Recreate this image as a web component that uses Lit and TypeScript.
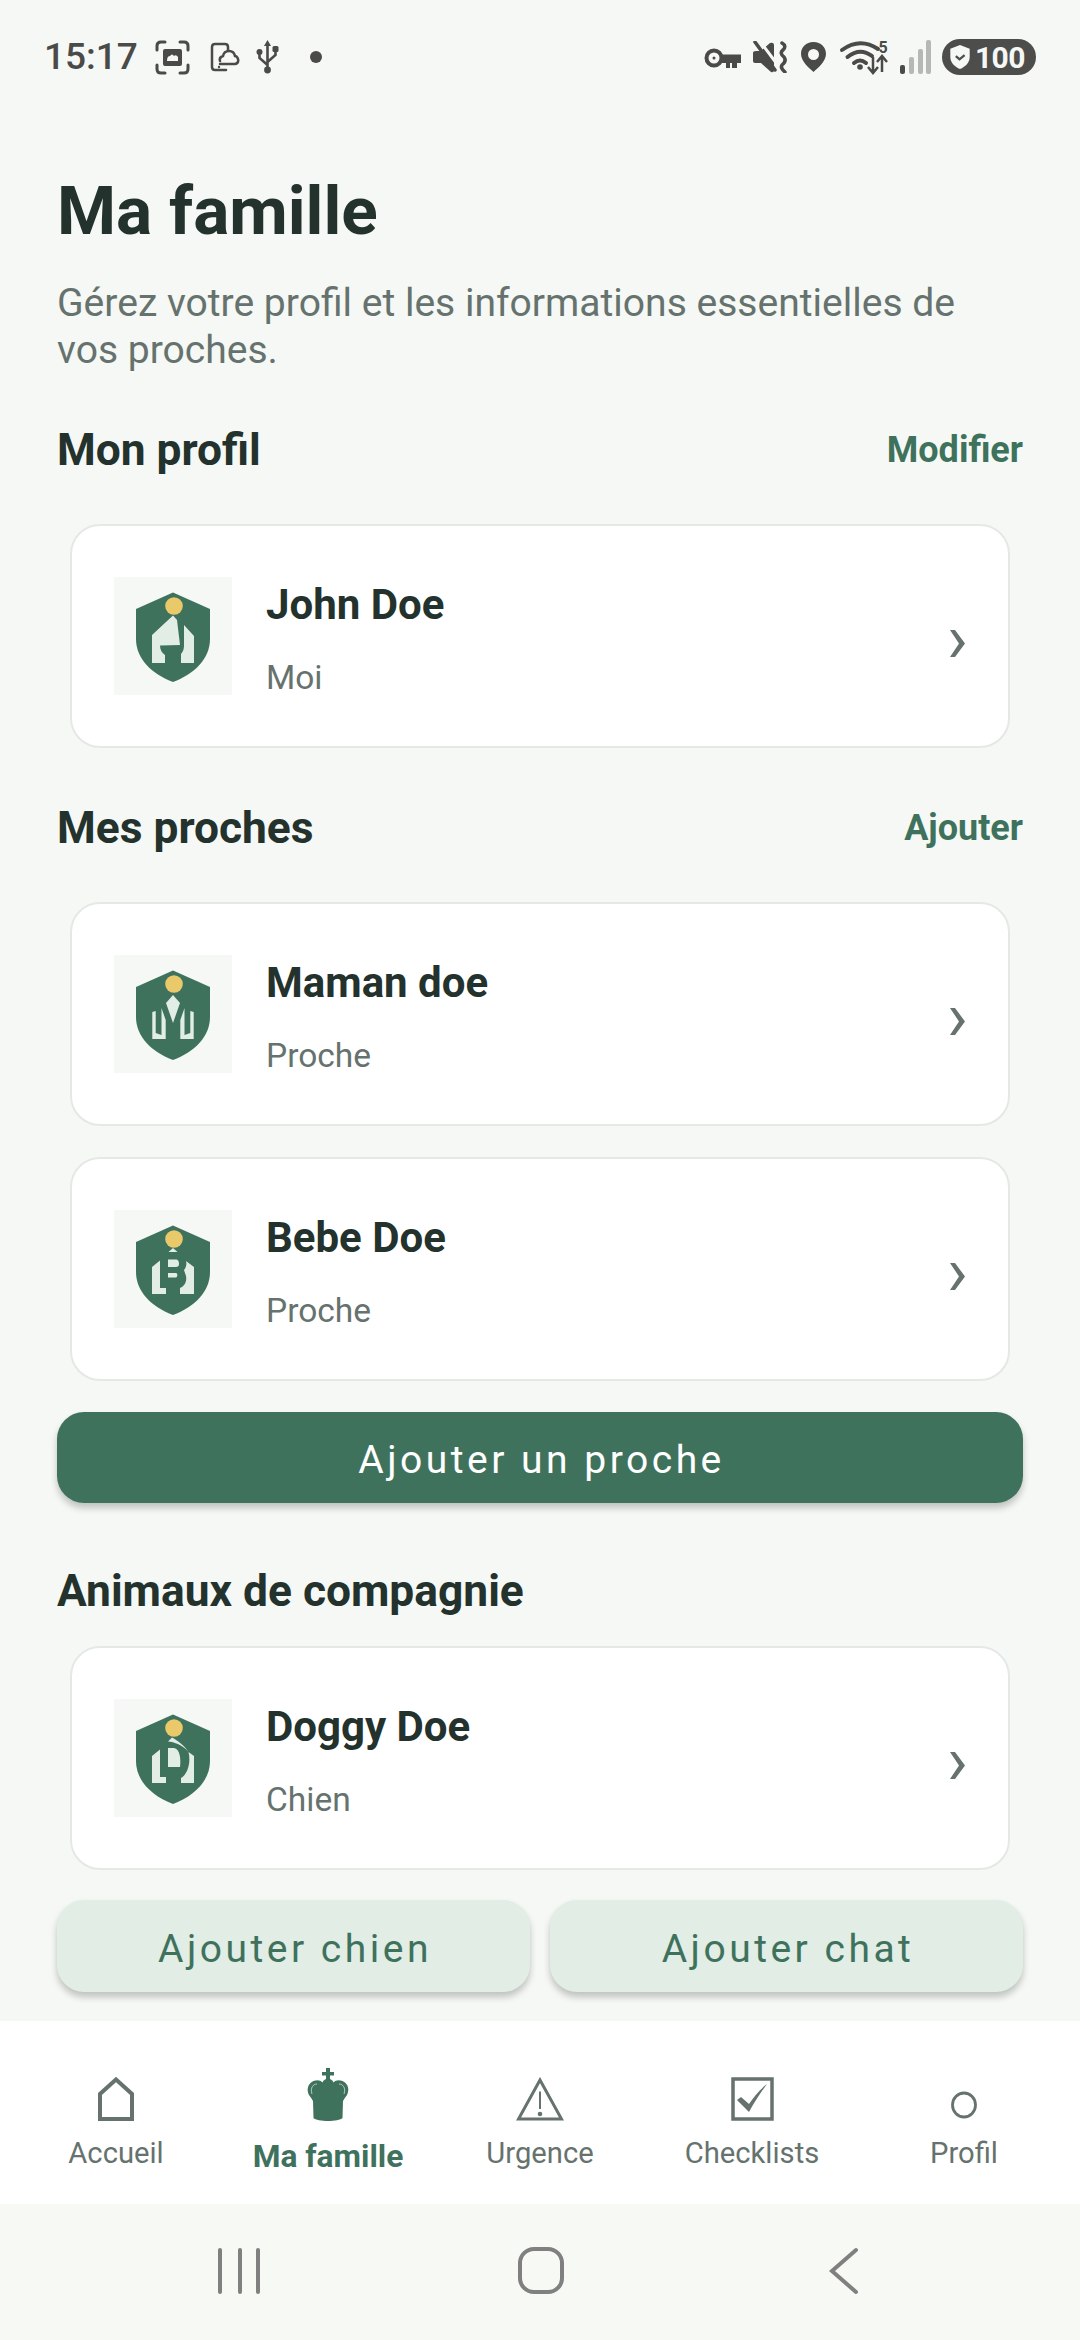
import { LitElement, html, css, svg } from "lit";
import { customElement } from "lit/decorators.js";

const shield = svg`<path fill="#3f725d" d="M59 15.5 L96 32 V62 C96 82 80 97 59 105 C38 97 22 82 22 62 V32Z"/><circle cx="60" cy="29" r="8.8" fill="#eac96b"/>`;
const L = "#e1ede5";
const figures: Record<string, unknown> = {
  john: svg`<path fill="${L}" d="M59 38.5 L63 43 L66 68 L46 68.5 C46 73 48 76 51 78 V86 H38 V58 L59 38.5Z"/><path fill="${L}" d="M70 48 L80 59 V86 H67 V77 C70 74 70 70 70 67Z"/>`,
  maman: svg`<path fill="${L}" d="M59 40 L66 48 L59 68 L52 48Z"/><path fill="${L}" d="M38.3 57 L41.7 56 V78 L47.5 80 V53 L51.7 65 V84 H38.3Z"/><path fill="${L}" d="M79.7 57 L76.3 56 V78 L70.5 80 V53 L66.3 65 V84 H79.7Z"/>`,
  bebe: svg`<path fill="${L}" d="M59 38 L63.5 42 H54.5Z"/><path fill="${L}" d="M38 57 L46 50.5 V78 H52 V84 H38Z"/><path fill="${L}" d="M54 49.5 H62 C64.5 49.5 65 52 65 54 C65 56 64 57 62 57 H54Z"/><path fill="${L}" d="M54 63 H62 C63.5 63 64 66.5 62 67.5 H54Z"/><path fill="${L}" d="M72 51 L80 57 V84 H66 V78 C71 76 73 71 72 66 C71.5 64 70.5 62 70 60 C72 58 73 54 72 51Z"/>`,
  doggy: svg`<path fill="${L}" d="M58 38.5 C64 42 70 46 74.5 53 C69 46 60 43 54 42.5Z"/><path fill="${L}" d="M38 57 L46 50.5 V78 H52 V84 H38Z"/><path fill="${L}" d="M54 49 H60 C66 50 67 60 66 68 H54Z"/><path fill="${L}" d="M74.5 53 L80 57 V84 H67 V79 C74 75 77 63 74.5 53Z"/>`,
};
const logo = (k: string) => html`<svg class="avatar" viewBox="0 0 118 118">${shield}${figures[k]}</svg>`;

const chevron = html`<svg class="chev" viewBox="0 0 15 27"><path fill="#66726e" d="M0 0H5L15 13.5 5 27H0L9 13.5Z"/></svg>`;

const card = (k: string, name: string, sub: string) => html`
  <div class="card">
    ${logo(k)}
    <div class="who"><div class="name">${name}</div><div class="sub">${sub}</div></div>
    ${chevron}
  </div>`;

const G = "#4a4a48";

@customElement("app-root")
export class AppRoot extends LitElement {
  static styles = css`
    :host { display: flex; flex-direction: column; width: 1080px; height: 2340px; overflow: hidden; background: #f5f8f4; font-family: Roboto, "Liberation Sans", sans-serif; color: #24322e; }
    .status { height: 114px; flex: none; display: flex; align-items: flex-start; justify-content: space-between; padding: 39px 44px 0 44px; box-sizing: border-box; }
    .sl, .sr { display: flex; align-items: center; height: 36px; }
    .time { font-size: 37px; font-weight: 500; color: #4a4a48; line-height: 36px; width: 111px; }
    .sl svg, .sr svg { display: block; flex: none; }
    .i2 { margin-left: 20px; } .i3 { margin-left: 16px; } .i4 { margin-left: 31px; }
    .sr svg + svg { margin-left: 12px; }
    .batt { margin-left: 11px; width: 94px; height: 36px; border-radius: 18px; background: #4d4d4b; color: #f5f8f4; display: flex; align-items: center; padding-left: 8px; box-sizing: border-box; font-size: 30px; font-weight: 700; gap: 5px; letter-spacing: -0.6px; }
    main { flex: 1; min-height: 0; overflow: hidden; padding: 59px 57px 0; box-sizing: border-box; }
    h1 { margin: 0; font-size: 67.5px; line-height: 76px; font-weight: 700; }
    .lead { margin: 31px 0 0; font-size: 39.05px; line-height: 47px; color: #66726e; }
    .head { display: flex; justify-content: space-between; align-items: center; height: 50px; }
    .head h2 { margin: 0; font-size: 44.3px; font-weight: 700; line-height: 48px; padding-top: 2px; }
    .head span { font-size: 36px; font-weight: 700; color: #3f725d; padding-top: 2px; }
    .h1 { margin-top: 50px; } .h2 { margin-top: 54px; } .h3 { margin-top: 62px; }
    .cards { display: flex; flex-direction: column; gap: 31px; margin: 0 13px; }
    .c1 { margin-top: 50px; } .c3 { margin-top: 31px; }
    .card { display: flex; align-items: center; height: 224px; box-sizing: border-box; background: #fff; border: 2px solid #e4e9e4; border-radius: 30px; padding: 0 43px 0 42px; }
    .avatar { width: 118px; height: 118px; flex: none; background: #f5f8f4; display: block; }
    .who { flex: 1; margin-left: 34px; padding-top: 5px; }
    .name { font-size: 42px; line-height: 50px; font-weight: 700; }
    .sub { font-size: 33.5px; line-height: 40px; color: #66726e; margin-top: 28px; }
    .chev { width: 15px; height: 27px; flex: none; display: block; margin-top: 15px; }
    .btn { display: flex; align-items: center; justify-content: center; height: 91px; padding: 5px 0 0 3px; box-sizing: border-box; border-radius: 27px; font-size: 39px; letter-spacing: 3.5px; box-shadow: 0 5px 7px rgba(0,0,0,.22); }
    .primary { margin-top: 31px; background: #3f725d; color: #fff; }
    .pair { display: grid; grid-template-columns: 1fr 1fr; gap: 20px; margin-top: 30px; }
    .soft { background: #e1ede5; color: #3f725d; height: 92px; }
    nav { flex: none; height: 183px; background: #fff; display: grid; grid-template-columns: repeat(5, 212px); padding: 0 10px; box-sizing: border-box; }
    .item { display: flex; flex-direction: column; align-items: center; color: #66726e; font-size: 29.2px; }
    .ic { height: 100px; display: flex; align-items: flex-end; }
    .ic svg { display: block; }
    .lab { margin-top: 14px; line-height: 36px; }
    .item.on { color: #3f725d; font-weight: 700; font-size: 31.7px; }
    .item.on .ic { height: 101px; }
    .item.on .lab { margin-top: 17px; }
    .gest { flex: none; height: 136px; background: #f7f9f5; display: block; }
    .gest svg { display: block; }
  `;

  render() {
    return html`
      <div class="status">
        <div class="sl">
          <span class="time">15:17</span>
          <svg width="35" height="35" viewBox="0 0 35 35" fill="none" stroke="${G}" stroke-width="3" stroke-linecap="round"><path d="M2 10V6Q2 2 6 2H10M25 2H29Q33 2 33 6V10M33 25V29Q33 33 29 33H25M10 33H6Q2 33 2 29V25"/><path fill="${G}" stroke="none" fill-rule="evenodd" d="M10 9H25Q27 9 27 11V24Q27 26 25 26H10Q8 26 8 24V11Q8 9 10 9ZM12 21H23V17Q21 14 19 16 17 13 15 16 12 16 12 21Z"/></svg>
          <svg class="i2" width="30" height="30" viewBox="0 0 30 30" fill="none" stroke="${G}" stroke-width="2.5" stroke-linecap="round"><path d="M16 28H5Q2 28 2 25V5Q2 2 5 2H15Q18 2 18 5V8"/><path d="M10 22H25Q29 21 28 17 27 14 25 14 24 9 19 9 14 9 13 14 9 15 10 19"/><circle cx="9" cy="25" r="1.2" fill="${G}" stroke="none"/></svg>
          <svg class="i3" width="23" height="34" viewBox="0 0 23 34" fill="none" stroke="${G}" stroke-width="2.6"><path d="M11.5 5V30M11.5 25L3.5 18V12M11.5 22L19.5 15V9"/><path d="M11.5 0L15 6H8Z" fill="${G}" stroke="none"/><circle cx="11.5" cy="30" r="3.4" fill="${G}" stroke="none"/><circle cx="3.5" cy="12" r="3" fill="${G}" stroke="none"/><rect x="16.5" y="6" width="6" height="6" rx="1.5" fill="${G}" stroke="none"/></svg>
          <svg class="i4" width="12" height="12" viewBox="0 0 12 12"><circle cx="6" cy="6" r="6" fill="${G}"/></svg>
        </div>
        <div class="sr">
          <svg width="37" height="21" viewBox="0 0 37 21" fill="none" style="margin-top:3px"><circle cx="10" cy="10" r="7.5" stroke="${G}" stroke-width="4"/><circle cx="10" cy="10" r="1.5" fill="${G}"/><path fill="${G}" d="M17 6.5H37V15H33V20H28V15H26V20H22V15H17Z"/></svg>
          <svg width="35" height="32" viewBox="0 0 35 32" fill="none"><path fill="${G}" d="M0 12Q0 10 3 10H8L17 2Q21 1 21 4V29Q21 32 18 31L8 22H3Q0 22 0 20Z"/><path d="M6 -1L27 27" stroke="#f5f8f4" stroke-width="3"/><path d="M2 1L22 29" stroke="${G}" stroke-width="3.5" stroke-linecap="round"/><path d="M29 2Q34 5 30 9 26 12 31 16 34 20 29 24 27 27 32 31" stroke="${G}" stroke-width="3.5" stroke-linecap="round"/></svg>
          <svg width="25" height="30" viewBox="0 0 25 30" style="margin-left:13px"><path fill="${G}" fill-rule="evenodd" d="M12.5 0C20 0 25 5 25 12C25 19 17 26 12.5 30C8 26 0 19 0 12C0 5 5 0 12.5 0ZM12.5 7A5.5 5.5 0 1 0 12.5 18A5.5 5.5 0 1 0 12.5 7Z"/></svg>
          <svg width="48" height="34" viewBox="0 0 48 34" fill="none" style="margin-left:14px;overflow:visible"><path d="M2 10Q20 -3 38 9M7.500 17Q20 7 32 16M14 23Q20 18 26 23" stroke="${G}" stroke-width="4" stroke-linecap="round"/><circle cx="20" cy="27" r="2.800" fill="${G}"/><text x="38.500" y="13" font-size="16" font-weight="700" fill="${G}" font-family="Roboto">5</text><path d="M33 17V32M28 27L33 33 38 27M42 32V17M37 22L42 16 47 22" stroke="${G}" stroke-width="2.500"/></svg>
          <svg width="31" height="34" viewBox="0 0 31 34" style="margin-left:12px"><rect x="0" y="25" width="5" height="9" rx="2" fill="${G}"/><rect x="9" y="17" width="5" height="17" rx="2" fill="#b6b8b4"/><rect x="18" y="9" width="5" height="25" rx="2" fill="#b6b8b4"/><rect x="26" y="0" width="5" height="34" rx="2" fill="#b6b8b4"/></svg>
          <div class="batt">
            <svg width="20" height="24" viewBox="0 0 21 26"><path fill="#f5f8f4" d="M10.500 0L21 4V13C21 19 16 24 10.500 26 5 24 0 19 0 13V4Z"/><path d="M6 12L10 15.500 15.500 11" fill="none" stroke="#4d4d4b" stroke-width="2.500"/></svg>
            <span>100</span>
          </div>
        </div>
      </div>
      <main>
        <h1>Ma famille</h1>
        <p class="lead">Gérez votre profil et les informations essentielles de vos proches.</p>
        <div class="head h1"><h2>Mon profil</h2><span>Modifier</span></div>
        <div class="cards c1">${card("john", "John Doe", "Moi")}</div>
        <div class="head h2"><h2>Mes proches</h2><span>Ajouter</span></div>
        <div class="cards c1">${card("maman", "Maman doe", "Proche")}${card("bebe", "Bebe Doe", "Proche")}</div>
        <div class="btn primary">Ajouter un proche</div>
        <div class="head h3"><h2>Animaux de compagnie</h2></div>
        <div class="cards c3">${card("doggy", "Doggy Doe", "Chien")}</div>
        <div class="pair"><div class="btn soft">Ajouter chien</div><div class="btn soft">Ajouter chat</div></div>
      </main>
      <nav>
        <div class="item"><div class="ic"><svg width="36" height="44" viewBox="0 0 36 44" fill="none"><path d="M2 42V17L18 2.500 34 17V42Z" stroke="#66726e" stroke-width="4"/></svg></div><span class="lab">Accueil</span></div>
        <div class="item on"><div class="ic"><svg width="42" height="54" viewBox="0 0 42 54"><path fill="#3f725d" d="M19 0H23V4H27V7.500H23V11C25 12 26 13 26.500 14.500C29 11.500 34 11.500 38 14.500C42 18 42 23 40 27C38.500 29 37 31 36 33L35.500 50C32 54 10 54 6.500 50L6 33C5 31 3.500 29 2 27C0 23 0 18 4 14.500C8 11.500 13 11.500 15.500 14.500C16 13 17 12 19 11V7.500H15V4H19Z"/><path d="M5 26C3 20 6 16 10 16M37 26C39 20 36 16 32 16" fill="none" stroke="#e1ede5" stroke-width=".7"/></svg></div><span class="lab">Ma famille</span></div>
        <div class="item"><div class="ic"><svg width="48" height="44" viewBox="0 0 48 44" fill="none"><path d="M24 3L2.500 42H45.500Z" stroke="#66726e" stroke-width="3"/><path d="M24 14.500V32" stroke="#66726e" stroke-width="2"/><circle cx="24" cy="37" r="2.300" fill="#66726e"/></svg></div><span class="lab">Urgence</span></div>
        <div class="item"><div class="ic"><svg width="43" height="44" viewBox="0 0 43 44" fill="none"><rect x="2" y="2" width="39" height="40" stroke="#66726e" stroke-width="3.500"/><path fill="#66726e" d="M6 23L10 20 18 27C23 20 28 13 36 7C30 15 24 24 18 35Z"/></svg></div><span class="lab">Checklists</span></div>
        <div class="item"><div class="ic"><svg width="26" height="28" viewBox="0 0 26 28" fill="none" style="margin-bottom:2px"><ellipse cx="13" cy="14" rx="11.500" ry="12" stroke="#66726e" stroke-width="2.800"/></svg></div><span class="lab">Profil</span></div>
      </nav>
      <div class="gest">
        <svg width="1080" height="136" viewBox="0 0 1080 136" fill="none" stroke="#808080" stroke-width="4" stroke-linecap="round">
          <path d="M220 46V88M240 46V88M258 46V88"/>
          <rect x="520" y="45" width="42" height="43" rx="14"/>
          <path d="M856 46L832 67 856 88"/>
        </svg>
      </div>
    `;
  }
}
